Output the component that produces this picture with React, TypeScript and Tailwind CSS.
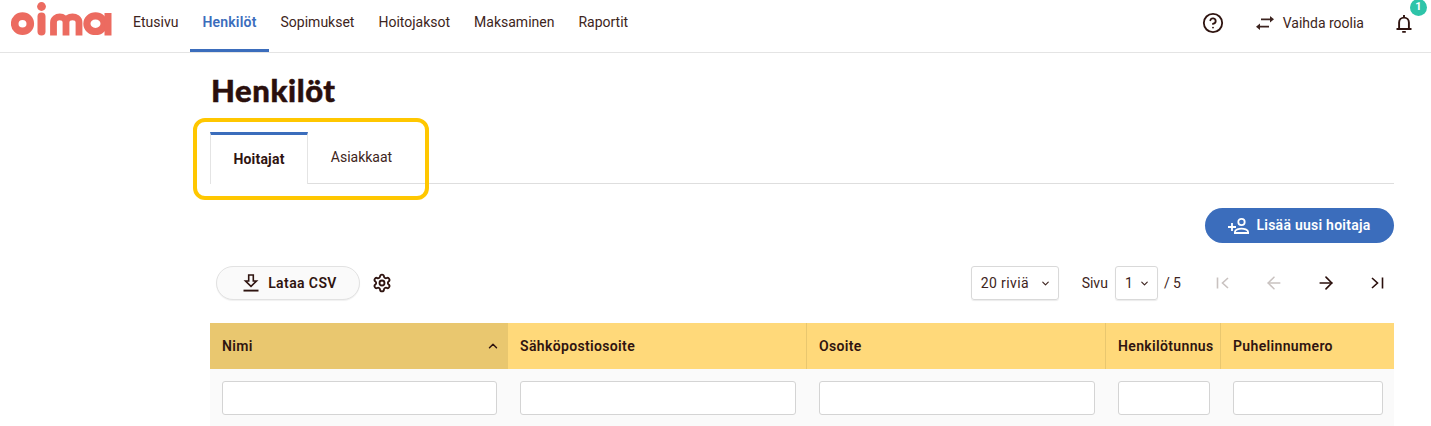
import { ArrowLeft, ArrowRight, ChevronDown, ChevronUp, CircleHelp, Settings } from "lucide-react";

const navItems = ["Etusivu", "Henkilöt", "Sopimukset", "Hoitojaksot", "Maksaminen", "Raportit"];

const columns = [
  { title: "Nimi", width: "w-[298px]", sorted: true },
  { title: "Sähköpostiosoite", width: "w-[299px]" },
  { title: "Osoite", width: "w-[299px]" },
  { title: "Henkilötunnus", width: "w-[115px]" },
  { title: "Puhelinnumero", width: "flex-1", noBorder: true },
];

function Logo() {
  return (
    <svg width="102" height="38" viewBox="0 0 102 38" className="text-[#ec6b60]">
      <g fill="none" stroke="currentColor">
        <ellipse cx="11.5" cy="23.7" rx="7.8" ry="7.6" strokeWidth="7.6" />
        <path d="M30.5 16.5v15" strokeWidth="8" strokeLinecap="round" />
        <path d="M42.5 35.5V22.5c0-7.5 12.5-7.5 12.5 0v13M55 22.5c0-7.5 13-7.5 13 0v13" strokeWidth="6.8" />
        <ellipse cx="84.5" cy="23.7" rx="8.6" ry="7.8" strokeWidth="7.2" />
        <path d="M97 13v22.5" strokeWidth="7" />
      </g>
      <circle cx="30.5" cy="6.5" r="4.4" fill="currentColor" />
    </svg>
  );
}

function PageFirst({ className }: { className?: string }) {
  return (
    <svg width="16" height="16" viewBox="0 0 16 16" fill="none" stroke="currentColor" strokeWidth="1.6" className={className}>
      <path d="M2.5 2.5v11M13 3l-5.5 5 5.5 5" />
    </svg>
  );
}

function PageLast({ className }: { className?: string }) {
  return (
    <svg width="16" height="16" viewBox="0 0 16 16" fill="none" stroke="currentColor" strokeWidth="1.6" className={className}>
      <path d="M13.5 2.5v11M3 3l5.5 5-5.5 5" />
    </svg>
  );
}

function SwapIcon() {
  return (
    <svg width="18" height="14" viewBox="0 0 18 14" fill="currentColor">
      <path d="M5 2.4 H14 V0 L18 3.3 14 6.6 V4.2 H5z" />
      <path d="M13 9.8 H4 V7.4 L0 10.7 4 14 V11.6 H13z" />
    </svg>
  );
}

function BellIcon() {
  return (
    <svg width="16" height="19" viewBox="0 0 16 19" fill="none" stroke="currentColor" strokeWidth="1.9">
      <path d="M0.5 15h15M3.1 15V8.5a4.9 4.9 0 0 1 9.8 0V15M8 3.6V1M6.2 17.9h3.6" />
    </svg>
  );
}

function DownloadIcon() {
  return (
    <svg width="16" height="18" viewBox="0 0 16 18" fill="none" stroke="currentColor">
      <path d="M5.7 1h4.6v6h3.2L8 12.4 2.5 7h3.2z" strokeWidth="1.6" />
      <path d="M0.5 16.6h15" strokeWidth="1.9" />
    </svg>
  );
}

function AddPersonIcon() {
  return (
    <svg width="22" height="18" viewBox="0 0 22 18" fill="none" stroke="currentColor" strokeWidth="1.8">
      <path d="M0 10h8M4 6v8" />
      <circle cx="13.5" cy="5" r="3.2" />
      <path d="M6.9 16v-1c0-2.4 4.2-3.4 6.6-3.4s6.6 1 6.6 3.4v1z" />
    </svg>
  );
}

export default function App() {
  return (
    <div className="relative h-[426px] w-[1431px] overflow-hidden bg-white font-['Roboto',sans-serif] text-[#2f1410]">
      {/* Top bar */}
      <header className="flex h-[53px] items-stretch border-b border-[#e4e4e4] pl-[11px] pr-[19px]">
        <div className="mr-[8px] flex items-start">
          <Logo />
        </div>
        <nav className="flex text-[14px]">
          {navItems.map((item) => (
            <a
              key={item}
              className={
                item === "Henkilöt"
                  ? "flex items-center border-b-[3px] border-[#3b6dbc] px-3 pb-[5px] font-semibold tracking-[0.2px] text-[#3b6dbc]"
                  : "flex items-center border-b-[3px] border-transparent px-3 pb-[5px] text-[#3d2420]"
              }
            >
              {item}
            </a>
          ))}
        </nav>
        <div className="ml-auto flex items-center pb-[6px] text-[14px] text-[#3d2420]">
          <CircleHelp size={22} strokeWidth={2} className="text-[#2f1410]" />
          <div className="ml-[32px] flex items-center gap-[9px]">
            <SwapIcon />
            <span>Vaihda roolia</span>
          </div>
          <div className="relative ml-[32px] text-[#2f1410]">
            <BellIcon />
            <span className="absolute -right-[15px] -top-[15px] flex h-[17px] w-[17px] items-center justify-center rounded-full bg-[#2ec4a9] text-[11px] font-bold text-white">
              1
            </span>
          </div>
        </div>
      </header>

      <main className="ml-[210px] w-[1184px]">
        <h1 className="ml-px mt-[19px] font-['Lato',sans-serif] text-[31px] font-black leading-[36px] tracking-[0.6px] text-[#2a0f0c] [-webkit-text-stroke:0.5px_#2a0f0c]">
          Henkilöt
        </h1>

        {/* Tabs */}
        <div className="mt-[24px] flex h-[52px] border-b border-[#dedede] text-[14px]">
          <div className="-mb-px flex w-[98px] items-center justify-center border-x border-t-[3px] border-x-[#e4e4e4] border-t-[#3b6dbc] bg-white font-bold tracking-[0.2px]">
            Hoitajat
          </div>
          <div className="flex w-[107px] items-center justify-center text-[#3d2420]">Asiakkaat</div>
        </div>

        <div className="mt-[24px] flex justify-end">
          <button className="flex h-[35px] w-[189px] items-center justify-center gap-[6px] rounded-full bg-[#3b6dbc] text-[14px] font-semibold tracking-[0.25px] text-white">
            <AddPersonIcon />
            Lisää uusi hoitaja
          </button>
        </div>

        {/* Toolbar */}
        <div className="mt-[23px] flex h-[34px] items-center text-[14px]">
          <button className="ml-[6px] flex h-[34px] w-[144px] items-center justify-center gap-[9px] rounded-full border border-[#e2e2e2] bg-[#fafafa] pl-[4px] font-semibold tracking-[0.4px] shadow-[0_1px_1px_rgba(0,0,0,0.06)]">
            <DownloadIcon />
            Lataa CSV
          </button>
          <Settings size={20} strokeWidth={2.2} className="ml-[12px]" />

          <div className="ml-auto flex items-center text-[#3d2420]">
            <div className="flex h-[34px] w-[88px] items-center justify-between rounded-[3px] border border-[#d9d9d9] pl-[9px] pr-[7px] tracking-[0.4px] shadow-[0_1px_1px_rgba(0,0,0,0.08)]">
              20 riviä
              <ChevronDown size={11} strokeWidth={2.5} />
            </div>
            <span className="ml-[23px]">Sivu</span>
            <div className="ml-[7px] flex h-[34px] w-[43px] items-center justify-between rounded-[3px] border border-[#d9d9d9] pl-[9px] pr-[7px] shadow-[0_1px_1px_rgba(0,0,0,0.08)]">
              1
              <ChevronDown size={11} strokeWidth={2.5} />
            </div>
            <span className="ml-[6px]">/ 5</span>
            <PageFirst className="ml-[34px] text-[#c9c2c0]" />
            <ArrowLeft size={20} strokeWidth={1.8} className="ml-[33px] text-[#c9c2c0]" />
            <ArrowRight size={20} strokeWidth={2} className="ml-[32px] text-[#2a0f0c]" />
            <PageLast className="ml-[33px] mr-[9px] text-[#2a0f0c]" />
          </div>
        </div>

        {/* Table */}
        <div className="mt-[23px]">
          <div className="flex h-[46px] bg-[#ffd97a] text-[14px] font-semibold tracking-[0.35px] text-[#2f1410]">
            {columns.map((col) => (
              <div
                key={col.title}
                className={[
                  col.width,
                  "flex items-center justify-between pl-[12px] pr-[7px]",
                  col.sorted ? "bg-[#e9c76f]" : "",
                  col.noBorder ? "" : "border-r border-[#e9c76f]",
                ].join(" ")}
              >
                {col.title}
                {col.sorted && <ChevronUp size={14} strokeWidth={2.5} />}
              </div>
            ))}
          </div>
          <div className="flex h-[57px] bg-[#fafafa] pt-[12px]">
            {columns.map((col) => (
              <div key={col.title} className={`${col.width} pl-[12px] pr-[11px]`}>
                <input className="h-[34px] w-full rounded-[3px] border border-[#d4d4d4] bg-white" />
              </div>
            ))}
          </div>
        </div>
      </main>

      {/* Highlight round the tabs */}
      <div className="pointer-events-none absolute left-[193px] top-[118px] h-[82px] w-[236px] rounded-[12px] border-4 border-[#ffc700]" />
    </div>
  );
}
